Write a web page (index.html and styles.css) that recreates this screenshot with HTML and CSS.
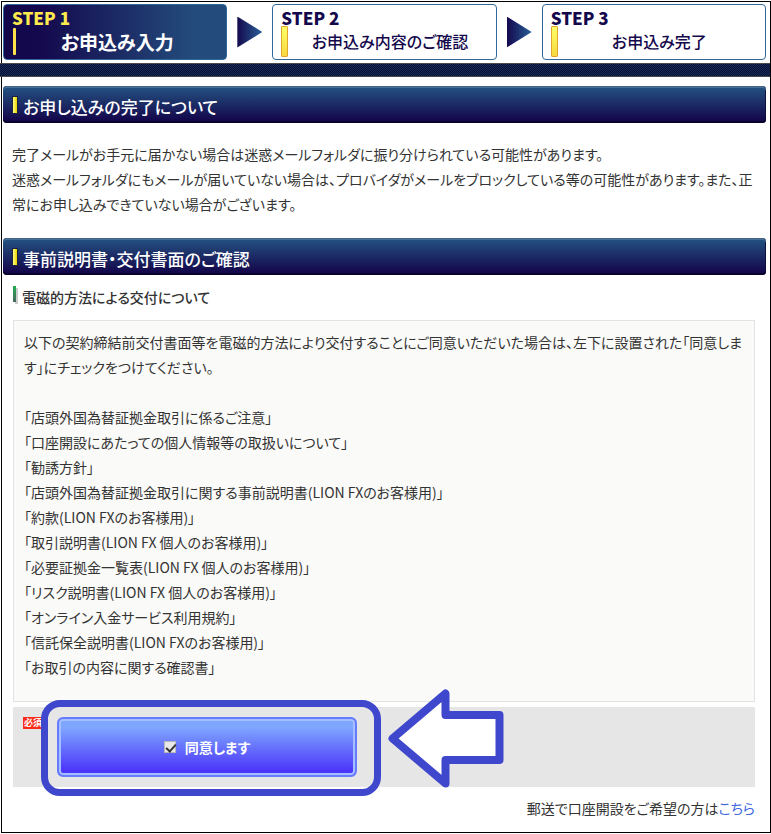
FILE: index.html
```html
<!DOCTYPE html>
<html lang="ja">
<head>
<meta charset="utf-8">
<title>お申込み入力</title>
<link rel="stylesheet" href="styles.css">
</head>
<body>
<div class="page">
  <ol class="steps">
    <li class="step step-current">
      <span class="step-no">STEP 1</span>
      <span class="step-body"><span class="step-name">お申込み入力</span></span>
    </li>
    <li class="step-arrow" aria-hidden="true"></li>
    <li class="step">
      <span class="step-no">STEP 2</span>
      <span class="step-body"><span class="step-name">お申込み内容のご確認</span></span>
    </li>
    <li class="step-arrow" aria-hidden="true"></li>
    <li class="step">
      <span class="step-no">STEP 3</span>
      <span class="step-body"><span class="step-name">お申込み完了</span></span>
    </li>
  </ol>
  <div class="band"></div>
  <main>
    <h2 class="bar">お申し込みの完了について</h2>
    <p class="notice">完了メールがお手元に届かない場合は迷惑メールフォルダに振り分けられている可能性があります。<br>迷惑メールフォルダにもメールが届いていない場合は、プロバイダがメールをブロックしている等の可能性があります。また、正常にお申し込みできていない場合がございます。</p>
    <h2 class="bar">事前説明書・交付書面のご確認</h2>
    <h3 class="sub">電磁的方法による交付について</h3>
    <div class="terms">
      <p>以下の契約締結前交付書面等を電磁的方法により交付することにご同意いただいた場合は、左下に設置された「同意します」にチェックをつけてください。</p>
      <ul>
        <li>「店頭外国為替証拠金取引に係るご注意」</li>
        <li>「口座開設にあたっての個人情報等の取扱いについて」</li>
        <li>「勧誘方針」</li>
        <li>「店頭外国為替証拠金取引に関する事前説明書(LION FXのお客様用)」</li>
        <li>「約款(LION FXのお客様用)」</li>
        <li>「取引説明書(LION FX 個人のお客様用)」</li>
        <li>「必要証拠金一覧表(LION FX 個人のお客様用)」</li>
        <li>「リスク説明書(LION FX 個人のお客様用)」</li>
        <li>「オンライン入金サービス利用規約」</li>
        <li>「信託保全説明書(LION FXのお客様用)」</li>
        <li>「お取引の内容に関する確認書」</li>
      </ul>
    </div>
    <div class="consent">
      <span class="required">必須</span>
      <label class="agree" for="agree">
        <input type="checkbox" id="agree" checked>
        <span>同意します</span>
      </label>
      <div class="ring"></div>
      <svg class="pointer" width="118" height="100" viewBox="0 0 118 100" aria-hidden="true">
        <path d="M5.500 49.500 58.500 4.500V26H112.500V71H58.500V94.500Z" fill="#fff" stroke="#3f48cc" stroke-width="8" stroke-linejoin="round"/>
      </svg>
    </div>
    <p class="mail">郵送で口座開設をご希望の方は<a href="#">こちら</a></p>
  </main>
</div>
</body>
</html>
```
FILE: styles.css
```css
* {
  box-sizing: border-box;
}

body {
  margin: 0;
  padding: 1px 0 1px 1px;
  background: #fff;
  color: #333;
  font: 14px/25px "Noto Sans CJK JP", sans-serif;
  font-feature-settings: "palt";
}

h2, h3, p, ol, ul {
  margin: 0;
  padding: 0;
}

ol, ul {
  list-style: none;
}

.page {
  border: 1px solid #000;
}

.steps {
  display: flex;
  align-items: center;
  gap: 10px;
  padding: 2px 4px 3px 1px;
}

.step {
  flex: 1;
  height: 56px;
  padding: 4px 8px;
  border: 1px solid #336699;
  border-radius: 4px;
  color: #14084c;
}

.step-no {
  display: block;
  width: max-content;
  font-size: 17px;
  font-weight: 900;
  line-height: 18px;
}

.step-body {
  display: flex;
  align-items: center;
  height: 29px;
}

.step-body::before {
  content: "";
  width: 5px;
  height: 29px;
  border: 1px solid #dfa52c;
  border-radius: 1px;
  background: linear-gradient(#ffff66, #f8d840);
}

.step-name {
  flex: 1;
  padding-left: 4px;
  text-align: center;
  font-size: 16px;
  font-weight: 500;
}

.step-current {
  background: linear-gradient(90deg, #14084c 15%, #234b7b 85%);
  color: #fff;
}

.step-current .step-no {
  color: #ffea4d;
}

.step-current .step-body::before {
  width: 3px;
  height: 27px;
  margin-left: 1px;
  border: 0;
  background: #ffe14a;
}

.step-current .step-name {
  padding-left: 0;
  font-size: 19px;
  font-weight: 700;
}

.step-arrow {
  width: 25px;
  height: 31px;
  background: linear-gradient(90deg, #14084c, #28619a);
  clip-path: polygon(0 0, 100% 50%, 0 100%);
}

.band {
  height: 14px;
  margin-left: -2px;
  border: 1px solid #4b4b4b;
  border-width: 1px 0;
  background: repeating-conic-gradient(#0a1030 0 25%, #162a5c 0 50%) 0 0 / 2px 2px;
}

main {
  padding: 9px 4px 11px 1px;
}

.bar {
  display: flex;
  align-items: center;
  gap: 6px;
  height: 37px;
  padding: 4px 10px 0;
  border-radius: 4px;
  background: linear-gradient(#245482, #14084c 92%);
  box-shadow: inset 0 1px #4b6180, inset 0 2px #417199, inset 0 -2px #08042a, inset -1px 0 #0c1238;
  color: #fff;
  font-size: 17px;
  font-weight: 500;
}

.bar::before {
  content: "";
  width: 4px;
  height: 16px;
  margin-bottom: 4px;
  background: linear-gradient(90deg, #ffff80, #e8d400);
  box-shadow: 0 0 0 1px #1a2440;
}

.notice {
  padding: 19px 10px 21px 9px;
}

.sub {
  display: flex;
  align-items: center;
  gap: 6px;
  padding: 10px 10px 0;
  font-size: 14px;
  font-weight: 500;
}

.sub::before {
  content: "";
  width: 3px;
  height: 16px;
  margin-bottom: 8px;
  background: linear-gradient(#1fb04e, #46665c);
  box-shadow: 2px 2px #ccc;
}

.terms {
  margin: 10px 11px 5px 10px;
  padding: 9px 10px 21px;
  border: 1px solid #e3e3e3;
  background: #fafaf8;
}

.terms ul {
  margin-top: 25px;
}

.consent {
  position: relative;
  display: flex;
  gap: 12px;
  height: 80px;
  margin: 0 11px 0 10px;
  padding: 10px;
  background: #e6e6e6;
}

.required {
  width: 22px;
  height: 12px;
  padding-left: 1px;
  background: #fb2a18;
  color: #fff;
  font-size: 9px;
  font-weight: 700;
  line-height: 12px;
}

.agree {
  display: flex;
  align-items: center;
  justify-content: center;
  gap: 9px;
  width: 300px;
  height: 60px;
  border: 2px solid #667bff;
  border-radius: 6px;
  background: linear-gradient(#7ea6ff 15%, #4c36fa 92%);
  box-shadow: inset 0 0 0 2px #a4bfff;
  color: #fff;
  font-weight: 700;
}

.agree input {
  appearance: none;
  width: 12px;
  height: 12px;
  margin: 0;
  border: 1px solid #b8b8b8;
  background: #e8e8e8;
}

.agree input:checked::after {
  content: "";
  display: block;
  width: 4px;
  height: 8px;
  margin-left: 3px;
  border: solid #333;
  border-width: 0 2px 2px 0;
  transform: rotate(42deg);
}

.ring {
  position: absolute;
  left: 28px;
  top: -7px;
  width: 340px;
  height: 96px;
  border: 7px solid #3f48cc;
  border-radius: 19px;
  pointer-events: none;
}

.pointer {
  position: absolute;
  left: 374px;
  top: -18px;
}

.mail {
  padding: 9px 11px 0;
  text-align: right;
}

.mail a {
  color: #4169e1;
  text-decoration: none;
}
```
